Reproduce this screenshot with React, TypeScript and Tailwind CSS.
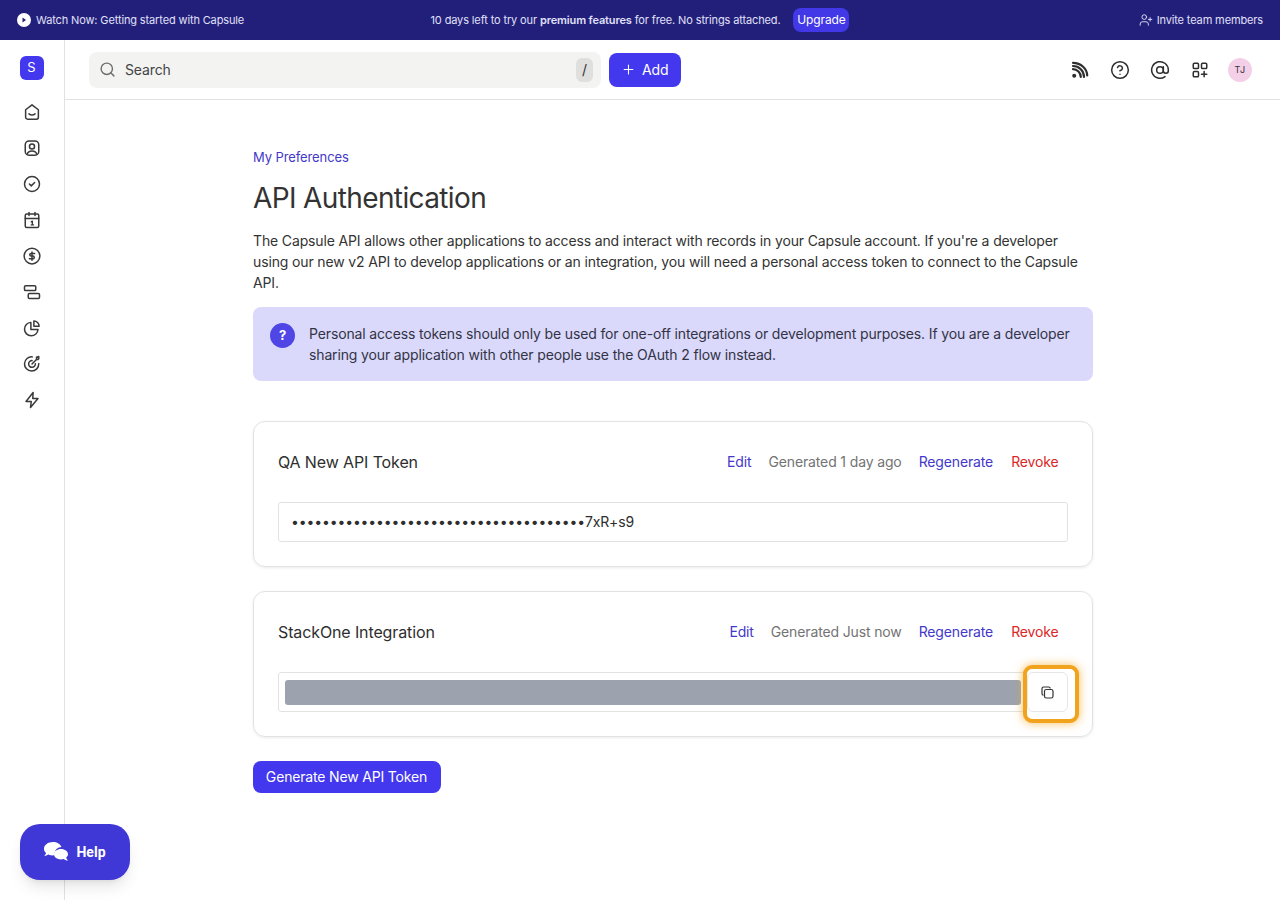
import React from "react";
import { Search, Plus, CircleHelp, AtSign, UserPlus } from "lucide-react";

const S = ({ children, size = 18, sw = 2 }: { children: React.ReactNode; size?: number; sw?: number }) => (
  <svg width={size} height={size} viewBox="0 0 24 24" fill="none" stroke="currentColor" strokeWidth={sw} strokeLinecap="round" strokeLinejoin="round">
    {children}
  </svg>
);

const navIcons = [
  <S key="a"><path d="M3.500 9 12 2.500 20.500 9v10a2.500 2.500 0 0 1-2.500 2.500H6A2.500 2.500 0 0 1 3.500 19z" /><path d="M8 14.500c2 2 6 2 8 0" /></S>,
  <S key="b"><rect x="3" y="2.500" width="18" height="19" rx="5" /><circle cx="12" cy="10" r="3.400" /><path d="M5.500 20.500c1-3.500 3.800-4.500 6.500-4.500s5.500 1 6.500 4.500" /></S>,
  <S key="c"><circle cx="12" cy="12" r="10" /><path d="m8.500 12 2.500 2.500 4.500-4.500" /></S>,
  <S key="d"><rect x="3" y="4" width="18" height="18" rx="2" /><path d="M3 10h18M8 2v4M16 2v4" /><path d="M11 14.500l1.500-1v5M11 18.500h3" strokeWidth={1.8} /></S>,
  <S key="e"><circle cx="12" cy="12" r="10.500" /><path d="M15.500 8.500H10.800a1.800 1.800 0 0 0 0 3.600h2.400a1.800 1.800 0 0 1 0 3.600H8.500M12 6.500v11" /></S>,
  <S key="f"><rect x="2" y="3.500" width="15" height="6.500" rx="1.500" /><rect x="7" y="14" width="15" height="6.500" rx="1.500" /></S>,
  <S key="g"><path d="M10.500 4.500a9 9 0 1 0 9.500 9.500h-9.500z" /><path d="M14.500 2.500a7 7 0 0 1 7 7h-7z" /></S>,
  <S key="h"><path d="M21 11.500A9.500 9.500 0 1 1 12.500 2.500" /><path d="M16.500 11.800a4.500 4.500 0 1 1-4.300-4.300" /><path d="m12 12 6-6M18 6V3l3-1v3l-1 1z" /></S>,
  <S key="i"><path d="M13.500 2 4 14h7l-1 8 10-12h-7z" /></S>,
];

function TokenHead({ name, edit, generated }: { name: string; edit: string; generated: string }) {
  return (
    <div className="flex items-center justify-between">
      <div className="text-[16px] leading-6 tracking-[-0.12px] text-[#2e2e2e]">{name}</div>
      <div className="flex items-center pr-[9.500px] text-sm leading-5">
        <span className="text-[#4338ca]">{edit}</span>
        <span className="ml-[17px] text-[#737373]">{generated}</span>
        <span className="ml-[17px] text-[#4338ca]">Regenerate</span>
        <span className="ml-[18px] text-[#dc2626]">Revoke</span>
      </div>
    </div>
  );
}

export default function App() {
  return (
    <div className="relative h-[900px] w-[1280px] overflow-hidden bg-white font-['Inter',sans-serif] text-[#2e2e2e]">
      <div className="grid h-10 grid-cols-[1fr_auto_1fr] items-center bg-[#221f7a] pl-[17px] pr-[17px] text-[11px] tracking-[-0.13px] text-[#e0e0f8]">
        <div className="flex items-center gap-[5px]">
          <svg width="14" height="14" viewBox="0 0 14 14">
            <circle cx="7" cy="7" r="7" fill="#fff" />
            <path d="M5.500 4.500 9 7l-3.500 2.500z" fill="#221f7a" />
          </svg>
          <span>Watch Now: Getting started with Capsule</span>
        </div>
        <div className="flex items-center">
          <span>10 days left to try our <b className="font-semibold">premium features</b> for free. No strings attached.</span>
          <span className="ml-[13px] flex h-6 w-14 items-center justify-center rounded-lg bg-[#4338e8] text-[12px] text-white">Upgrade</span>
        </div>
        <div className="flex items-center justify-end gap-[4px]">
          <UserPlus size={14} strokeWidth={1.6} />
          <span>Invite team members</span>
        </div>
      </div>

      <div className="flex h-[860px]">
        <aside className="flex w-[65px] shrink-0 flex-col items-center border-r border-[#e2e2e2] pt-4 text-[#3a3a3a]">
          <div className="mr-[1px] flex h-6 w-6 items-center justify-center rounded-md bg-[#4338ee] text-[13px] text-white">S</div>
          <div className="mt-[23px] flex flex-col items-center gap-[18px] pr-[1px]">
            {navIcons.map((ic, i) => (
              <div key={i} className="flex h-[18px] w-[18px] items-center justify-center">{ic}</div>
            ))}
          </div>
        </aside>

        <div className="flex min-w-0 flex-1 flex-col">
          <header className="flex h-[60px] shrink-0 items-center border-b border-[#e2e2e2] pl-6 pr-[28px] tracking-[-0.13px]">
            <div className="flex h-9 w-[512px] items-center rounded-lg bg-[#f3f3f2] pl-[10px] pr-2">
              <Search size={17} strokeWidth={2} className="text-[#6e6e6e]" />
              <span className="ml-[9px] text-sm text-[#444]">Search</span>
              <span className="ml-auto flex h-6 w-[17px] items-center justify-center rounded-md bg-[#dfdfdd] text-sm text-[#333]">/</span>
            </div>
            <div className="ml-2 flex h-[34px] w-[72px] items-center gap-[6px] rounded-lg bg-[#4338ee] pl-[12px] text-sm text-white">
              <Plus size={15} strokeWidth={1.7} />
              <span>Add</span>
            </div>
            <div className="ml-auto flex items-center text-[#2e2e2e]">
              <div className="flex w-10 justify-center">
                <svg width="18" height="18" viewBox="0 0 18 18" fill="none" stroke="currentColor" strokeLinecap="round">
                  <circle cx="3.200" cy="14.800" r="2" fill="currentColor" stroke="none" />
                  <path d="M2 8.200c4.200 0 7.800 3.600 7.800 7.800" strokeWidth="2.200" />
                  <path d="M2 5c6.200 0 11 4.800 11 11" strokeWidth="2.200" />
                  <path d="M2 1.800c8 0 14.200 6.200 14.200 12.600" strokeWidth="2.200" />
                </svg>
              </div>
              <div className="flex w-10 justify-center"><CircleHelp size={20} strokeWidth={1.8} /></div>
              <div className="flex w-10 justify-center"><AtSign size={20} strokeWidth={1.8} /></div>
              <div className="flex w-10 justify-center">
                <S>
                  <rect x="3" y="3" width="7" height="7" rx="1.500" />
                  <rect x="14" y="3" width="7" height="7" rx="1.500" />
                  <rect x="3" y="14" width="7" height="7" rx="1.500" />
                  <path d="M17.500 14v7M14 17.500h7" />
                </S>
              </div>
              <div className="ml-2 flex h-6 w-6 items-center justify-center rounded-full bg-[#f3d0e8] text-[9px] tracking-[0.5px] text-[#333]">TJ</div>
            </div>
          </header>

          <main className="ml-[188px] w-[840px] pt-[49px] tracking-[-0.14px]">
            <div className="text-[13px] leading-4 tracking-[-0.1px] text-[#4338ca]">My Preferences</div>
            <h1 className="mt-[16px] text-[28px] font-normal leading-[34px] tracking-[-0.62px] text-[#333]">API Authentication</h1>
            <p className="mt-[15px] pr-2 text-sm leading-[21px] text-[#333]">
              The Capsule API allows other applications to access and interact with records in your Capsule account. If you're a developer using our new v2 API to develop applications or an integration, you will need a personal access token to connect to the Capsule API.
            </p>
            <div className="mt-[14px] flex h-[74px] items-start rounded-lg bg-[#dad9fc] pl-[17px] pr-[16px] pt-[16px]">
              <div className="flex h-[25px] w-[25px] shrink-0 items-center justify-center rounded-full bg-[#4f46e5] text-[13px] font-bold leading-none text-white">?</div>
              <p className="ml-[14px] text-sm leading-[21px] text-[#333344]">
                Personal access tokens should only be used for one-off integrations or development purposes. If you are a developer sharing your application with other people use the OAuth 2 flow instead.
              </p>
            </div>

            <section className="mt-10 h-[146px] rounded-xl border border-[#e2e2e2] px-6 pt-[28px] shadow-[0_1px_3px_rgba(0,0,0,0.08)]">
              <TokenHead name="QA New API Token" edit="Edit" generated="Generated 1 day ago" />
              <div className="mt-[28px] flex h-10 items-center rounded-[3px] border border-[#e2e2e2] pl-3 text-sm text-[#2e2e2e]">
                {"•".repeat(38)}7xR+s9
              </div>
            </section>

            <section className="mt-6 h-[146px] rounded-xl border border-[#e2e2e2] px-6 pt-[28px] shadow-[0_1px_3px_rgba(0,0,0,0.08)]">
              <TokenHead name="StackOne Integration" edit="Edit" generated="Generated Just now" />
              <div className="relative mt-[28px] flex h-10 items-center rounded-[3px] border border-[#e2e2e2] pl-[6px]">
                <div className="h-[25px] w-[736px] rounded-[3px] bg-[#9ca3af]" />
                <div className="absolute -right-[12px] -top-[8px] flex h-[58px] w-[56px] items-center justify-center rounded-[9px] border-4 border-[#f2a31d] bg-white shadow-[0_0_8px_1px_rgba(245,165,30,0.6)]">
                  <div className="absolute left-0 top-[3px] flex h-10 w-[41px] items-center justify-center rounded-md border border-[#e6e6e6]">
                    <svg width="13" height="13" viewBox="0 0 13 13" fill="none" stroke="#333" strokeWidth="1.200">
                      <rect x="3.500" y="3.500" width="8.500" height="8.500" rx="1.800" />
                      <path d="M2.500 9.200A1.500 1.500 0 0 1 1 7.700V2.500A1.500 1.500 0 0 1 2.500 1h5.200a1.500 1.500 0 0 1 1.500 1.500" />
                    </svg>
                  </div>
                </div>
              </div>
            </section>

            <div className="mt-6 inline-flex h-8 w-[188px] items-center justify-center rounded-lg bg-[#4338ee] pr-[1px] text-sm tracking-[-0.17px] text-white">Generate New API Token</div>
          </main>
        </div>
      </div>

      <div className="absolute bottom-5 left-5 flex h-14 w-[110px] items-center justify-center gap-2 rounded-[20px] bg-[#3f37d6] text-white shadow-lg">
        <svg width="24" height="21" viewBox="0 0 24 21" fill="#fff">
          <path d="M9 0C4 0 0 2.900 0 6.700c0 1.700.8 3.200 2.100 4.400-.3 1-1 1.900-1.900 2.700 1.600 0 3-.6 4.100-1.300 1.400.6 3 .9 4.700.9 1 0 1.200 0 1.600-.1C10 8.500 13 5.500 17.500 5 16.300 2 13 0 9 0z" />
          <path d="M17 7c-3.900 0-7 2.300-7 5.200s3.100 5.200 7 5.200c.9 0 1.800-.1 2.600-.4 1 .8 2.500 1.500 4.400 1.500-.9-.8-1.600-1.900-1.800-3 1.100-.9 1.800-2 1.800-3.300C24 9.300 20.900 7 17 7z" />
        </svg>
        <span className="font-['Roboto',sans-serif] text-sm font-bold">Help</span>
      </div>
    </div>
  );
}
